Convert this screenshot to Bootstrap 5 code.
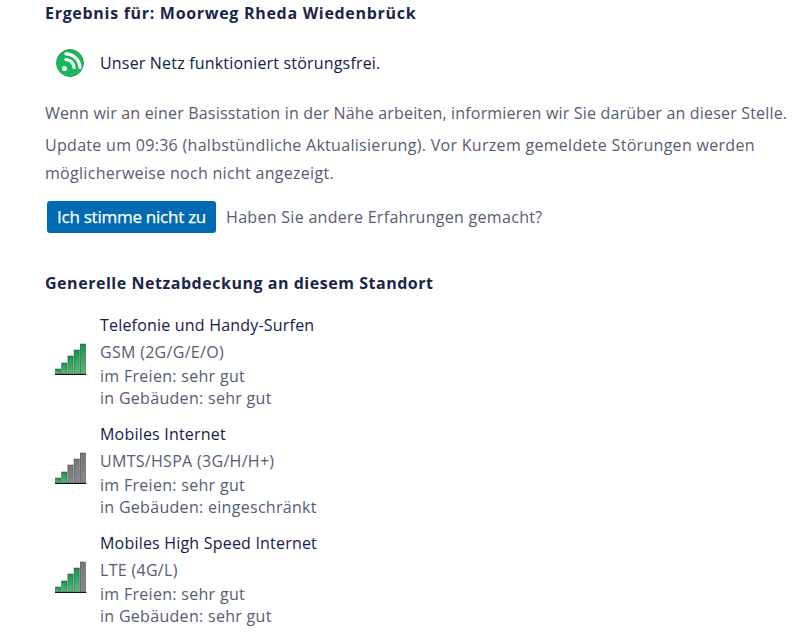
<!DOCTYPE html>
<html lang="de">
<head>
  <meta charset="UTF-8" />
  <meta name="viewport" content="width=device-width, initial-scale=1" />
  <title>Netzstatus</title>
  <link href="https://cdn.jsdelivr.net/npm/bootstrap@5.3.3/dist/css/bootstrap.min.css" rel="stylesheet">
  <style>
    body {
      background-color: #fff;
      color: #565c74;
      font-family: "Open Sans", "Liberation Sans", sans-serif;
      font-size: 16px;
      letter-spacing: .3px;
      line-height: 22px;
      padding: 2px 0 0 45px;
      overflow: hidden;
    }
    .page-title {
      color: #1b2549;
      font-size: 16px;
      font-weight: 700;
      letter-spacing: .7px;
      line-height: 22px;
      margin: 0;
    }
    .status-row { height: 40px; margin-top: 19px; padding-left: 11px; gap: 16px; }
    .status-icon { width: 28px; height: 28px; flex: none; }
    .status-text { color: #14204a; letter-spacing: .18px; }
    .info-line { margin: 0; line-height: 28px; width: 745px; }
    .info-first { margin-top: 16px; margin-bottom: 4px; letter-spacing: .18px; }
    .btn-disagree {
      background-color: #006bb3;
      border: 0;
      border-radius: 3px;
      color: #fff;
      font-size: 17px;
      letter-spacing: -.25px;
      line-height: 32px;
      padding: 0 10px;
      -webkit-text-stroke: .25px #fff;
    }
    .btn-disagree:hover { background-color: #005a96; color: #fff; }
    .action-row { margin: 14px 0 0 2px; gap: 10px; }
    .page-title.section-title { margin-top: 39px; margin-bottom: 20px; letter-spacing: .53px; }
    .net-row { padding-left: 10px; margin-bottom: 14px; gap: 13px; }
    .net-name { color: #14204a; margin-bottom: 5px; letter-spacing: .2px; }
    .net-tech { margin-bottom: 2px; }
    .bars-icon { width: 32px; height: 33px; flex: none; margin-top: -4px; }
  </style>
</head>
<body>

<h1 class="page-title">Ergebnis für: Moorweg Rheda Wiedenbrück</h1>

<div class="status-row d-flex align-items-center">
  <svg class="status-icon" viewBox="0 0 28 28">
    <circle cx="14" cy="14" r="13.5" fill="#16b85a" stroke="#3a9a5c" stroke-width="1"/>
    <circle cx="8.5" cy="19.5" r="2.5" fill="#fff"/>
    <path d="M10 10.5a8.5 8.5 0 0 1 8 8M10 4.8a14.5 14.5 0 0 1 14 13.5" fill="none" stroke="#fff" stroke-width="3.2" stroke-linecap="round"/>
  </svg>
  <span class="status-text">Unser Netz funktioniert störungsfrei.</span>
</div>

<p class="info-line info-first">Wenn wir an einer Basisstation in der Nähe arbeiten, informieren wir Sie darüber an dieser Stelle.</p>
<p class="info-line">Update um 09:36 (halbstündliche Aktualisierung). Vor Kurzem gemeldete Störungen werden möglicherweise noch nicht angezeigt.</p>

<div class="action-row d-flex align-items-center">
  <button class="btn btn-disagree" type="button">Ich stimme nicht zu</button>
  <span>Haben Sie andere Erfahrungen gemacht?</span>
</div>

<h2 class="page-title section-title">Generelle Netzabdeckung an diesem Standort</h2>

<div id="coverage"></div>

<script>
  const coverage = [
    { name: 'Telefonie und Handy-Surfen', tech: 'GSM (2G/G/E/O)', out: 'sehr gut', inside: 'sehr gut', level: 5 },
    { name: 'Mobiles Internet', tech: 'UMTS/HSPA (3G/H/H+)', out: 'sehr gut', inside: 'eingeschränkt', level: 2 },
    { name: 'Mobiles High Speed Internet', tech: 'LTE (4G/L)', out: 'sehr gut', inside: 'sehr gut', level: 4 }
  ];
  const barHeights = [5, 11, 18, 24, 30];

  function barsSvg(level, idx) {
    let bars = '';
    barHeights.forEach((h, i) => {
      const fill = i < level ? `url(#green${idx})` : `url(#grey${idx})`;
      bars += `<rect x="${0.5 + i * 6.2}" y="${31 - h}" width="5.2" height="${h}" fill="${fill}" stroke="#222" stroke-opacity=".7" stroke-width=".6"/>`;
    });
    return `<svg class="bars-icon" viewBox="0 0 32 33">
      <defs>
        <linearGradient id="green${idx}" x1="0" y1="0" x2="0" y2="1"><stop offset="0" stop-color="#0c9a4a"/><stop offset="1" stop-color="#56bb7c"/></linearGradient>
        <linearGradient id="grey${idx}" x1="0" y1="0" x2="0" y2="1"><stop offset="0" stop-color="#777"/><stop offset="1" stop-color="#8a8a8a"/></linearGradient>
      </defs>${bars}<rect x="0" y="31" width="31.4" height="1" fill="#111"/></svg>`;
  }

  document.getElementById('coverage').innerHTML = coverage.map((c, i) => `
    <div class="net-row d-flex align-items-center">
      ${barsSvg(c.level, i)}
      <div>
        <div class="net-name">${c.name}</div>
        <div class="net-tech">${c.tech}</div>
        <div>im Freien: ${c.out}</div>
        <div>in Gebäuden: ${c.inside}</div>
      </div>
    </div>`).join('');
</script>

<script src="https://cdn.jsdelivr.net/npm/bootstrap@5.3.3/dist/js/bootstrap.bundle.min.js"></script>
</body>
</html>
